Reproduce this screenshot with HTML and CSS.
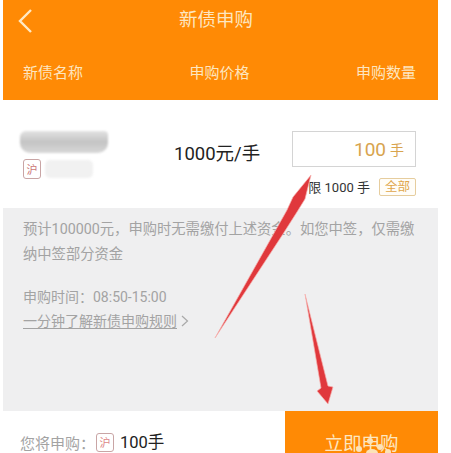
FILE: index.html
```html
<!DOCTYPE html>
<html lang="zh">
<head>
<meta charset="utf-8">
<title>新债申购</title>
<link rel="stylesheet" href="styles.css">
</head>
<body>
<div class="page">
  <header class="header">
    <div class="nav">
      <svg class="back" viewBox="0 0 16 26" width="16" height="26"><path d="M14 2 L3 13 L14 24" fill="none" stroke="#ffe9c4" stroke-width="2.4"/></svg>
      <h1 class="title">新债申购</h1>
    </div>
    <div class="cols"><span>新债名称</span><span>申购价格</span><span>申购数量</span></div>
  </header>
  <section class="row">
    <div class="name">
      <div class="blur-a"></div>
      <div class="name-sub"><span class="tag">沪</span><div class="blur-b"></div></div>
    </div>
    <div class="price">1000元/手</div>
    <div class="qty">
      <div class="input"><span class="num">100</span><span class="unit">手</span></div>
      <div class="limit"><span>限 1000 手</span><span class="all">全部</span></div>
    </div>
  </section>
  <section class="info">
    <p class="para">预计100000元，申购时无需缴付上述资金。如您中签，仅需缴纳中签部分资金</p>
    <p class="time">申购时间：08:50-15:00</p>
    <p class="rule"><span class="link">一分钟了解新债申购规则</span><svg class="chev" viewBox="0 0 8 12" width="8" height="12"><path d="M1 1 L6.5 6 L1 11" fill="none" stroke="#a9a9a9" stroke-width="1.2"/></svg></p>
  </section>
  <footer class="footer">
    <div class="summary"><span class="lab">您将申购：</span><span class="tag tag-sm">沪</span><span class="amt">100手</span></div>
    <div class="buy"><span>立即申购</span></div>
  </footer>
  <svg class="arrows" viewBox="0 0 451 453" width="451" height="453">
    <path class="arrow" d="M215 338 L287 210 L293 197 L311 175 L305 199 L297 212 L283 234 Z"/>
    <path class="arrow" d="M305 294 L328 386 L333 387 L328 404 L317 391 L321 388 Z"/>
    <g fill="#fbe3b8">
      <circle cx="359" cy="449" r="3"/><circle cx="370" cy="441" r="3"/><circle cx="380" cy="447" r="3"/><circle cx="388" cy="452" r="3"/><ellipse cx="372" cy="453" rx="6" ry="4"/>
    </g>
  </svg>
</div>
</body>
</html>
```
FILE: styles.css
```css
* { box-sizing: border-box; }
html, body { margin: 0; padding: 0; background: #fff; }
body { font-family: "Noto Sans CJK SC", "Roboto", sans-serif; }
.page { position: relative; width: 451px; height: 453px; overflow: hidden; background: #fff; padding-left: 3px; padding-right: 13px; }
.header { height: 100px; background: #ff8a05; color: #fde6c0; display: flex; flex-direction: column; }
.nav { height: 36px; position: relative; display: flex; align-items: center; justify-content: center; padding-right: 9px; }
.back { position: absolute; left: 14px; top: 8px; }
.title { margin: 0; font-size: 18.5px; font-weight: 400; line-height: 36px; }
.cols { display: flex; justify-content: space-between; padding: 25px 22px 0 20px; font-size: 15px; line-height: 22px; }
.row { height: 108px; display: flex; background: #fff; position: relative; }
.name { width: 171px; padding: 31px 0 0 20px; }
.blur-a { width: 88px; height: 22px; margin-left: -3px; background: linear-gradient(#e2e2e2, #c4c4c4 50%, #d8d8d8); border-radius: 6px 4px 10px 10px; filter: blur(1.2px); }
.name-sub { display: flex; align-items: center; gap: 4px; margin-top: 6px; }
.tag { display: inline-flex; align-items: center; justify-content: center; width: 18px; height: 20px; border: 1px solid #c9a5a5; border-radius: 3px; color: #c77; font-size: 11px; line-height: 1; }
.blur-b { width: 48px; height: 18px; background: #f1f1f1; border-radius: 5px; filter: blur(1px); }
.price { width: 118px; padding-top: 41px; font-size: 18.5px; line-height: 26px; color: #222; font-family: "Roboto", "Noto Sans CJK SC", sans-serif; }
.qty { width: 124px; padding-top: 31px; }
.input { width: 124px; height: 36px; border: 1px solid #d4d4d4; display: flex; align-items: center; justify-content: flex-end; gap: 4px; padding-right: 11px; color: #d8a44e; }
.num { font-size: 19px; font-family: "Roboto", sans-serif; }
.unit { font-size: 14px; }
.limit { display: flex; justify-content: flex-end; align-items: center; gap: 9px; margin-top: 10px; font-size: 13px; color: #333; font-family: "Roboto", "Noto Sans CJK SC", sans-serif; }
.all { width: 37px; height: 18px; border: 1px solid #e6cd9e; border-radius: 2px; color: #e0a64a; font-size: 12.5px; line-height: 16px; text-align: center; background: #fffdf8; }
.info { height: 203px; background: #efeff0; padding: 9px 18px 0 20px; color: #a3a3a3; font-size: 14px; font-family: "Roboto", "Noto Sans CJK SC", sans-serif; }
.para { margin: 0; font-size: 14.3px; line-height: 25px; }
.time { margin: 18px 0 0; line-height: 24px; }
.rule { margin: 0; line-height: 24px; display: flex; align-items: center; gap: 4px; color: #a3a3a3; }
.link { text-decoration: underline; text-underline-offset: 2px; }
.footer { height: 42px; display: flex; justify-content: space-between; background: #fff; }
.summary { display: flex; align-items: center; padding: 21px 0 0 17px; font-size: 15px; height: 42px; line-height: 22px; }
.lab { color: #a3a3a3; width: 76px; }
.tag-sm { width: 18px; height: 19px; color: #d88; margin-right: 6px; }
.amt { color: #222; font-size: 16.5px; font-family: "Roboto", "Noto Sans CJK SC", sans-serif; }
.buy { width: 153px; height: 42px; background: #ff8a05; color: #fde6c0; font-size: 18.5px; display: flex; justify-content: center; padding-top: 21px; line-height: 20px; }
.arrows { position: absolute; left: 0; top: 0; pointer-events: none; }
.arrow { fill: #e0383c; stroke: #f7b0ae; stroke-width: 0.7; }
```
